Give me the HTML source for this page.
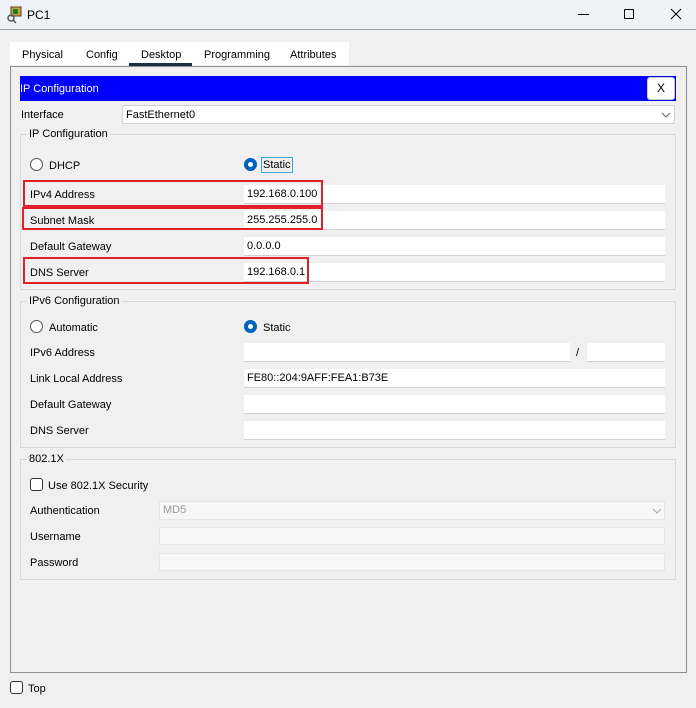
<!DOCTYPE html>
<html><head><style>
*{box-sizing:border-box;margin:0;padding:0}
body{width:696px;height:708px;background:#f0f0f0;font-family:"Liberation Sans",sans-serif;font-size:11px;color:#000;position:relative;overflow:hidden}
.a{position:absolute}
.inp{position:absolute;background:#fff;border-bottom:1px solid #d0d0d0;height:19px;line-height:18px;padding-left:3px}
.lbl{position:absolute;line-height:14px}
.grp{position:absolute;border:1px solid #d8d8d8}
.gt{position:absolute;background:#f0f0f0;padding:0 2px;line-height:12px}
.rad{position:absolute;width:13px;height:13px;border:1px solid #555;border-radius:50%;background:#fff}
.rad.on{border:none;background:#0060c0}
.rad.on::after{content:"";position:absolute;left:4px;top:4px;width:5px;height:5px;border-radius:50%;background:#fff}
.red{position:absolute;border:2px solid #e0202a}
.chk{position:absolute;width:13px;height:13px;border:1px solid #333;border-radius:3px;background:#fff}
.dis{background:#f7f7f7;border:1px solid #e6e6e6}
</style></head><body>
<div class="a" style="left:0;top:0;width:696px;height:30px;background:#eef2f7;border-bottom:1px solid #9aa0a6"></div>
<svg class="a" style="left:6px;top:6px" width="18" height="18" viewBox="0 0 18 18"><rect x="5" y="1" width="10" height="9" fill="#c8a040" stroke="#5a4020"/><rect x="7" y="3" width="5" height="5" fill="#208020"/><circle cx="5" cy="12" r="3" fill="none" stroke="#555" stroke-width="1.5"/><path d="M7 14l3 3" stroke="#555" stroke-width="1.5"/></svg>
<div class="lbl" style="left:27px;top:8px;font-size:12px">PC1</div>
<div class="a" style="left:578px;top:14px;width:11px;height:1px;background:#000"></div>
<div class="a" style="left:624px;top:9px;width:10px;height:10px;border:1px solid #000;border-radius:1px"></div>
<svg class="a" style="left:670px;top:8px" width="12" height="12"><path d="M1 1L11 11M11 1L1 11" stroke="#000" stroke-width="1"/></svg>

<div class="a" style="left:10px;top:42px;width:339px;height:23px;background:#fff"></div>
<div class="lbl" style="left:22px;top:48px">Physical</div>
<div class="lbl" style="left:86px;top:48px">Config</div>
<div class="lbl" style="left:141px;top:48px">Desktop</div>
<div class="a" style="left:129px;top:63px;width:63px;height:3px;background:#1d2d44"></div>
<div class="lbl" style="left:204px;top:48px">Programming</div>
<div class="lbl" style="left:290px;top:48px">Attributes</div>

<div class="a" style="left:10px;top:66px;width:677px;height:607px;border:1px solid #8a8f96"></div>
<div class="a" style="left:20px;top:76px;width:656px;height:25px;background:#0000ff"></div>
<div class="lbl" style="left:20px;top:82px;color:#fff">IP Configuration</div>
<div class="a" style="left:647px;top:77px;width:28px;height:23px;background:#fff;border:1px solid #ccc;border-radius:3px;text-align:center;line-height:21px;font-size:12px">X</div>
<div class="lbl" style="left:21px;top:108px">Interface</div>
<div class="inp" style="left:122px;top:105px;width:553px;height:19px;border:1px solid #d0d0d0;border-radius:2px">FastEthernet0</div>
<svg class="a" style="left:661px;top:111px" width="10" height="8"><path d="M1 2l4 4 4-4" fill="none" stroke="#666"/></svg>

<div class="grp" style="left:20px;top:134px;width:656px;height:156px"></div>
<div class="gt" style="left:27px;top:128px">IP Configuration</div>
<div class="rad" style="left:30px;top:158px"></div><div class="lbl" style="left:49px;top:159px">DHCP</div>
<div class="rad on" style="left:244px;top:158px"></div><div class="lbl" style="left:261px;top:157px;border:1px solid #3aa7d8;padding:0 1px;line-height:14px">Static</div>

<div class="lbl" style="left:30px;top:188px">IPv4 Address</div><div class="inp" style="left:244px;top:185px;width:421px">192.168.0.100</div>
<div class="lbl" style="left:30px;top:214px">Subnet Mask</div><div class="inp" style="left:244px;top:211px;width:421px">255.255.255.0</div>
<div class="lbl" style="left:30px;top:240px">Default Gateway</div><div class="inp" style="left:244px;top:237px;width:421px">0.0.0.0</div>
<div class="lbl" style="left:30px;top:266px">DNS Server</div><div class="inp" style="left:244px;top:263px;width:421px">192.168.0.1</div>
<div class="red" style="left:23px;top:180px;width:300px;height:27px"></div>
<div class="red" style="left:22px;top:207px;width:301px;height:23px"></div>
<div class="red" style="left:23px;top:257px;width:286px;height:27px"></div>

<div class="grp" style="left:20px;top:301px;width:656px;height:147px"></div>
<div class="gt" style="left:27px;top:295px">IPv6 Configuration</div>
<div class="rad" style="left:30px;top:320px"></div><div class="lbl" style="left:49px;top:321px">Automatic</div>
<div class="rad on" style="left:244px;top:320px"></div><div class="lbl" style="left:263px;top:321px">Static</div>
<div class="lbl" style="left:30px;top:346px">IPv6 Address</div><div class="inp" style="left:244px;top:343px;width:326px"></div>
<div class="lbl" style="left:576px;top:346px">/</div><div class="inp" style="left:587px;top:343px;width:78px"></div>
<div class="lbl" style="left:30px;top:372px">Link Local Address</div><div class="inp" style="left:244px;top:369px;width:421px">FE80::204:9AFF:FEA1:B73E</div>
<div class="lbl" style="left:30px;top:398px">Default Gateway</div><div class="inp" style="left:244px;top:395px;width:421px"></div>
<div class="lbl" style="left:30px;top:424px">DNS Server</div><div class="inp" style="left:244px;top:421px;width:421px"></div>

<div class="grp" style="left:20px;top:459px;width:656px;height:121px"></div>
<div class="gt" style="left:27px;top:453px">802.1X</div>
<div class="chk" style="left:30px;top:478px"></div><div class="lbl" style="left:48px;top:479px">Use 802.1X Security</div>
<div class="lbl" style="left:30px;top:504px">Authentication</div>
<div class="a dis" style="left:159px;top:501px;width:506px;height:19px;color:#999;line-height:17px;padding-left:3px">MD5</div>
<svg class="a" style="left:652px;top:507px" width="10" height="8"><path d="M1 2l4 4 4-4" fill="none" stroke="#aaa"/></svg>
<div class="lbl" style="left:30px;top:530px">Username</div><div class="a dis" style="left:159px;top:527px;width:506px;height:18px"></div>
<div class="lbl" style="left:30px;top:556px">Password</div><div class="a dis" style="left:159px;top:553px;width:506px;height:18px"></div>

<div class="chk" style="left:10px;top:681px"></div><div class="lbl" style="left:28px;top:682px">Top</div>
</body></html>
